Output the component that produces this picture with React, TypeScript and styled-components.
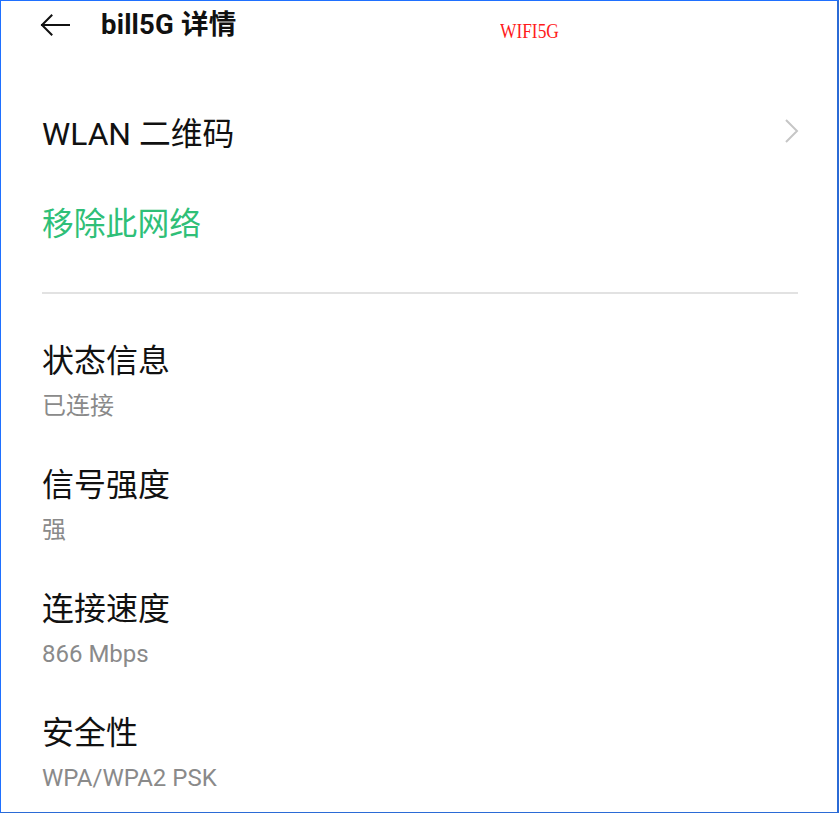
import React from "react";
import styled, { createGlobalStyle } from "styled-components";

const GlobalStyle = createGlobalStyle`
  html, body {
    margin: 0;
    padding: 0;
    background: #ffffff;
  }
  body {
    font-family: Roboto, "Noto Sans CJK SC", "Noto Sans", sans-serif;
    -webkit-font-smoothing: antialiased;
  }
`;

const Frame = styled.div`
  box-sizing: border-box;
  width: 839px;
  height: 813px;
  border-left: 1px solid #1f70ff;
  border-top: 1px solid #1f70ff;
  border-right: 2px solid #2b6bd6;
  border-bottom: 1px solid #2b6bd6;
  padding: 0 40px 0 41px;
  overflow: hidden;
  background: #fff;
  color: #111;
`;

const Header = styled.header`
  position: relative;
  height: 47px;
  display: flex;
  align-items: center;
  gap: 31px;
`;

const BackButton = styled.button`
  border: 0;
  background: none;
  padding: 0;
  margin-left: -2px;
  width: 30px;
  height: 24px;
  display: flex;
  align-items: center;
  color: #111;
  cursor: pointer;
`;

const Title = styled.h1`
  margin: 0;
  font-size: 27.5px;
  font-weight: 700;
  line-height: 34px;
  letter-spacing: 0.2px;
`;

const Tag = styled.span`
  position: absolute;
  left: 458px;
  top: 19px;
  font-family: "Liberation Serif", serif;
  font-size: 22px;
  line-height: 22px;
  color: #ff1a1a;
  transform: scaleX(0.79);
  transform-origin: left center;
`;

const Menu = styled.div`
  padding-top: 37px;
  display: flex;
  flex-direction: column;
`;

const MenuRow = styled.div<{ $accent?: boolean }>`
  height: ${(p) => (p.$accent ? 88 : 92)}px;
  display: flex;
  align-items: center;
  justify-content: space-between;
  font-size: 31.8px;
  color: ${(p) => (p.$accent ? "#2fbf78" : "#111")};
  cursor: pointer;
`;

const Chevron = styled.svg`
  width: 16px;
  height: 26px;
  margin-right: -3px;
  color: #c6c6c6;
`;

const Divider = styled.div`
  margin: 27px -1px 0 0;
  height: 2px;
  background: #e2e2e2;
`;

const DetailList = styled.dl`
  margin: 0;
  padding-top: 45px;
  display: flex;
  flex-direction: column;
`;

const DetailItem = styled.div`
  flex-shrink: 0;
  height: 124px;
  display: flex;
  flex-direction: column;
`;

const DetailTitle = styled.dt`
  font-size: 32px;
  line-height: 44px;
  color: #111;
`;

const DetailValue = styled.dd`
  margin: 8px 0 0;
  font-size: 24px;
  line-height: 30px;
  color: #8a8a8a;
`;

const details = [
  { title: "状态信息", value: "已连接" },
  { title: "信号强度", value: "强" },
  { title: "连接速度", value: "866 Mbps" },
  { title: "安全性", value: "WPA/WPA2 PSK" },
];

export default function App() {
  return (
    <>
      <GlobalStyle />
      <Frame>
        <Header>
          <BackButton aria-label="返回">
            <svg width="30" height="22" viewBox="0 0 30 22" fill="none">
              <path
                d="M29 11H2M11.5 1.5L2 11l9.5 9.5"
                stroke="currentColor"
                strokeWidth="2"
                strokeLinecap="square"
              />
            </svg>
          </BackButton>
          <Title>bill5G 详情</Title>
          <Tag>WIFI5G</Tag>
        </Header>

        <Menu>
          <MenuRow>
            <span>WLAN 二维码</span>
            <Chevron viewBox="0 0 16 26" fill="none">
              <path
                d="M2 2l11 11L2 24"
                stroke="currentColor"
                strokeWidth="2"
              />
            </Chevron>
          </MenuRow>
          <MenuRow $accent>移除此网络</MenuRow>
        </Menu>

        <Divider />

        <DetailList>
          {details.map((d) => (
            <DetailItem key={d.title}>
              <DetailTitle>{d.title}</DetailTitle>
              <DetailValue>{d.value}</DetailValue>
            </DetailItem>
          ))}
        </DetailList>
      </Frame>
    </>
  );
}
